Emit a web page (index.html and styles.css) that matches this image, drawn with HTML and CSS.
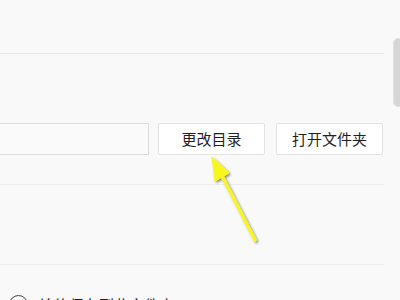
FILE: index.html
```html
<!DOCTYPE html>
<html lang="zh-CN">
<head>
<meta charset="utf-8">
<link rel="stylesheet" href="styles.css">
</head>
<body>
<div class="page">
  <div class="top"></div>
  <div class="row">
    <div class="path-input"></div>
    <button class="btn btn-change">更改目录</button>
    <button class="btn btn-open">打开文件夹</button>
  </div>
  <div class="divider first"></div>
  <div class="divider second"></div>
  <div class="option">
    <span class="radio"></span>
    <span class="label">始终保存到此文件夹</span>
  </div>
</div>
<div class="scrollbar"></div>
<svg class="arrow" width="400" height="300" viewBox="0 0 400 300">
  <defs>
    <filter id="sh" x="-50%" y="-50%" width="200%" height="200%">
      <feDropShadow dx="1.5" dy="1.5" stdDeviation="1.2" flood-color="#000" flood-opacity="0.45"/>
    </filter>
  </defs>
  <g filter="url(#sh)">
    <line x1="255" y1="240" x2="219" y2="170" stroke="#f7f71c" stroke-width="3.2" stroke-linecap="round"/>
    <polygon points="212,157 229,173 215,181" fill="#f7f71c" stroke="#f7f71c" stroke-width="1" stroke-linejoin="round"/>
  </g>
</svg>
</body>
</html>
```
FILE: styles.css
```css
html, body {
  margin: 0;
  padding: 0;
  width: 400px;
  height: 300px;
  overflow: hidden;
  background: #f9f9f9;
  font-family: "Noto Sans CJK SC", "Noto Sans", sans-serif;
  color: #1f1f1f;
}
.page {
  width: 384px;
}
.top {
  height: 53px;
  border-bottom: 1px solid #e7e7e7;
}
.row {
  display: flex;
  align-items: stretch;
  margin-top: 69px;
  height: 32px;
}
.path-input {
  width: 151px;
  margin-left: -2px;
  box-sizing: border-box;
  border: 1px solid #dcdcdc;
  background: #fafafa;
}
.btn {
  box-sizing: border-box;
  width: 107px;
  height: 32px;
  border: 1px solid #e3e3e3;
  border-radius: 2px;
  background: #ffffff;
  font-family: "Noto Sans CJK SC", sans-serif;
  font-size: 15px;
  color: #1f1f1f;
  padding: 0;
  line-height: 30px;
}
.btn-change {
  margin-left: 9px;
}
.btn-open {
  margin-left: 11px;
}
.divider {
  border-bottom: 1px solid #ececec;
}
.divider.first {
  margin-top: 29px;
}
.divider.second {
  margin-top: 79px;
}
.option {
  display: flex;
  align-items: center;
  gap: 11px;
  margin-top: 29px;
  padding-left: 9px;
}
.radio {
  width: 17px;
  height: 17px;
  border: 1.5px solid #444;
  border-radius: 50%;
  flex: none;
}
.label {
  font-size: 15px;
  color: #1f1f1f;
}
.scrollbar {
  position: absolute;
  left: 393px;
  top: 38px;
  width: 10px;
  height: 69px;
  border-radius: 5px;
  background: #d6d6d6;
  border: 1px solid #e2e2e2;
  box-sizing: border-box;
}
.arrow {
  position: absolute;
  left: 0;
  top: 0;
  pointer-events: none;
}
```
